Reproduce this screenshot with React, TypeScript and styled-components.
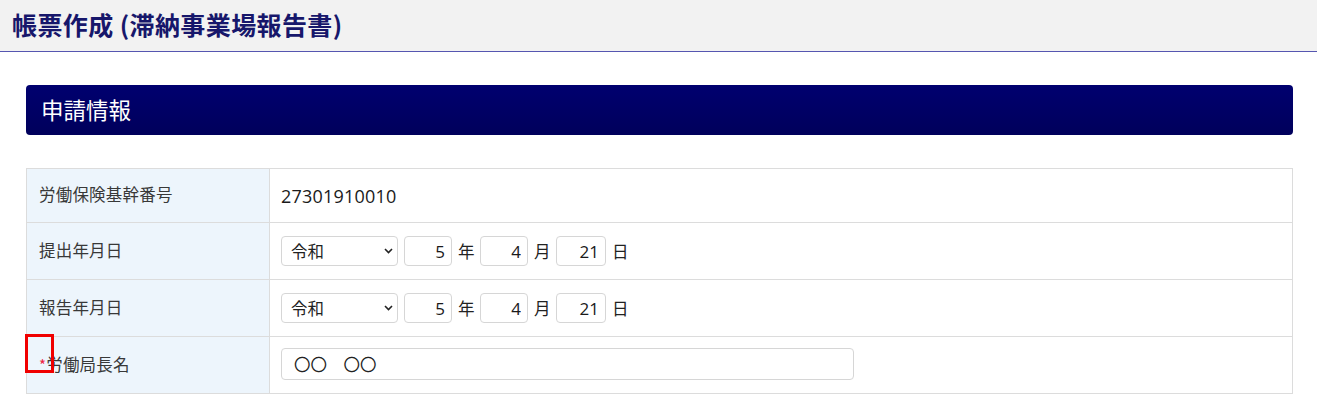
import React from "react";
import styled, { createGlobalStyle } from "styled-components";

const Global = createGlobalStyle`
  html, body { margin: 0; padding: 0; background: #fff; }
  body { font-family: "Noto Sans CJK JP", "Noto Sans", sans-serif; color: #333; }
  * { box-sizing: border-box; }
`;

const Header = styled.header`
  height: 52px;
  background: #f2f2f2;
  border-bottom: 1px solid #5656b0;
  display: flex;
  align-items: center;
  padding: 0 12px 3px;
`;

const Title = styled.h1`
  margin: 0;
  font-size: 25px;
  font-weight: 700;
  color: #17176b;
  letter-spacing: 0.4px;
`;

const Main = styled.main`
  padding: 33px 24px 0 26px;
`;

const SectionHeader = styled.div`
  height: 50px;
  border-radius: 4px;
  background: linear-gradient(#00006f, #00005b);
  display: flex;
  align-items: center;
  padding: 0 15px 3px;
  color: #fff;
  font-size: 22.5px;
`;

const Table = styled.table`
  margin-top: 33px;
  width: 100%;
  border-collapse: collapse;
  border: 1px solid #dcdcdc;
`;

const Row = styled.tr<{ $h: number }>`
  height: ${(p) => p.$h}px;
  border-top: 1px solid #dcdcdc;
`;

const LabelCell = styled.th`
  position: relative;
  width: 243px;
  background: #edf5fc;
  border-right: 1px solid #dcdcdc;
  text-align: left;
  font-weight: 400;
  font-size: 16.5px;
  letter-spacing: 0.2px;
  color: #383838;
  padding: 0 12px 3px;
`;

const ValueCell = styled.td`
  padding: 0 11px;
  font-size: 16px;
  color: #222;
`;

const Plain = styled.span`
  font-family: "Open Sans", "Noto Sans", sans-serif;
  font-size: 18px;
  letter-spacing: 0.2px;
  color: #1a1a1a;
`;

const Line = styled.div`
  display: flex;
  align-items: center;
  gap: 6px;
`;

const SelectWrap = styled.div`
  position: relative;
  width: 117px;
  height: 30px;
`;

const Era = styled.select`
  appearance: none;
  width: 100%;
  height: 100%;
  border: 1px solid #d6d6d6;
  border-radius: 4px;
  background: #fff;
  font-family: "Noto Sans CJK JP", sans-serif;
  font-size: 16.5px;
  color: #222;
  padding: 0 9px;
`;

const Chevron = styled.svg`
  position: absolute;
  right: 5px;
  top: 12px;
  width: 9px;
  height: 6px;
  pointer-events: none;
`;

const Num = styled.input<{ $w?: number }>`
  width: ${(p) => p.$w ?? 48}px;
  height: 30px;
  border: 1px solid #d6d6d6;
  border-radius: 4px;
  text-align: right;
  font-family: "Open Sans", "Noto Sans", sans-serif;
  font-size: 17px;
  color: #1a1a1a;
  padding: 0 6px;
`;

const Unit = styled.span`
  font-size: 16.5px;
  color: #222;
  width: 16px;
`;

const TextInput = styled.input`
  width: 573px;
  height: 32px;
  margin-top: -2px;
  border: 1px solid #d6d6d6;
  border-radius: 4px;
  font-family: "Noto Sans CJK JP", sans-serif;
  font-size: 16.5px;
  color: #222;
  padding: 0 12px;
`;

const Req = styled.span`
  color: #ee2244;
  font-size: 15px;
`;

const Mark = styled.div`
  position: absolute;
  left: -2px;
  top: -3px;
  width: 29px;
  height: 39px;
  border: 3px solid #f00000;
`;

function DateField() {
  return (
    <Line>
      <SelectWrap>
        <Era defaultValue="令和">
          <option>令和</option>
          <option>平成</option>
        </Era>
        <Chevron viewBox="0 0 9 6">
          <path d="M1 1l3.5 3.5L8 1" fill="none" stroke="#222" strokeWidth="1.6" />
        </Chevron>
      </SelectWrap>
      <Num defaultValue="5" />
      <Unit>年</Unit>
      <Num defaultValue="4" />
      <Unit>月</Unit>
      <Num $w={50} defaultValue="21" />
      <Unit>日</Unit>
    </Line>
  );
}

export default function App() {
  return (
    <>
      <Global />
      <Header>
        <Title>帳票作成 (滞納事業場報告書)</Title>
      </Header>
      <Main>
        <SectionHeader>申請情報</SectionHeader>
        <Table>
          <tbody>
            <Row $h={54}>
              <LabelCell>労働保険基幹番号</LabelCell>
              <ValueCell>
                <Plain>27301910010</Plain>
              </ValueCell>
            </Row>
            <Row $h={57}>
              <LabelCell>提出年月日</LabelCell>
              <ValueCell>
                <DateField />
              </ValueCell>
            </Row>
            <Row $h={57}>
              <LabelCell>報告年月日</LabelCell>
              <ValueCell>
                <DateField />
              </ValueCell>
            </Row>
            <Row $h={57}>
              <LabelCell>
                <Mark />
                <Req>*</Req>労働局長名
              </LabelCell>
              <ValueCell>
                <TextInput defaultValue="〇〇　〇〇" />
              </ValueCell>
            </Row>
          </tbody>
        </Table>
      </Main>
    </>
  );
}
